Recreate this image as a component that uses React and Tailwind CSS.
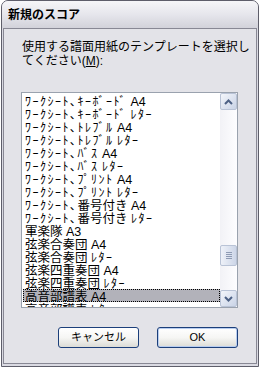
import React from "react";

const items = [
  "ﾜｰｸｼｰﾄ､ｷｰﾎﾞｰﾄﾞ A4",
  "ﾜｰｸｼｰﾄ､ｷｰﾎﾞｰﾄﾞ ﾚﾀｰ",
  "ﾜｰｸｼｰﾄ､ﾄﾚﾌﾞﾙ A4",
  "ﾜｰｸｼｰﾄ､ﾄﾚﾌﾞﾙ ﾚﾀｰ",
  "ﾜｰｸｼｰﾄ､ﾊﾞｽ A4",
  "ﾜｰｸｼｰﾄ､ﾊﾞｽ ﾚﾀｰ",
  "ﾜｰｸｼｰﾄ､ﾌﾟﾘﾝﾄ A4",
  "ﾜｰｸｼｰﾄ､ﾌﾟﾘﾝﾄ ﾚﾀｰ",
  "ﾜｰｸｼｰﾄ､番号付き A4",
  "ﾜｰｸｼｰﾄ､番号付き ﾚﾀｰ",
  "軍楽隊 A3",
  "弦楽合奏団 A4",
  "弦楽合奏団 ﾚﾀｰ",
  "弦楽四重奏団 A4",
  "弦楽四重奏団 ﾚﾀｰ",
  "高音部譜表 A4",
  "高音部譜表 ﾚﾀｰ",
];

const font = { fontFamily: '"Liberation Sans", "Noto Sans CJK JP", sans-serif' };

function Item({ text }) {
  const parts = text.split(/([\uFF61-\uFF9F]+)/).filter((p) => p.length);
  return parts.map((p, i) =>
    /[\uFF61-\uFF9F]/.test(p) ? (
      <span key={i} className="text-[12px] tracking-[1.5px]">
        {p}
      </span>
    ) : (
      <span key={i} className="text-[12.5px]">
        {p}
      </span>
    )
  );
}

function ScrollBtn({ children }) {
  return (
    <div className="h-[17px] w-[17px] rounded-[2px] border border-[#b9c3d6] bg-gradient-to-br from-[#f4f6fb] to-[#c9d3e6] flex items-center justify-center">
      {children}
    </div>
  );
}

export default function App() {
  return (
    <div className="w-[260px] h-[368px] bg-white" style={font}>
      <div className="ml-px w-[258px] h-[367px] border border-[#5e5e6a] rounded-t-[7px] bg-[#dadae2] flex flex-col overflow-hidden">
        <div className="h-[27px] shrink-0 bg-gradient-to-b from-[#f6f6f8] via-[#e6e6ec] to-[#d2d2da] flex items-center pl-[6px]">
          <span className="text-[12px] font-bold text-black leading-none">新規のスコア</span>
        </div>
        <div className="ml-px mr-px mb-[2px] flex-1 border border-[#888894] bg-[#e3e3e8] flex flex-col">
          <div className="pl-[18px] pt-[11px] text-[12px] leading-[14px] text-black">
            <div className="whitespace-nowrap">使用する譜面用紙のテンプレートを選択し</div>
            <div>
              てください(<span className="underline">M</span>):
            </div>
          </div>
          <div className="ml-[17px] mt-[24px] w-[217px] h-[216px] border border-[#9aa2ae] bg-white flex">
            <div className="flex-1 overflow-hidden pl-px pt-px">
              {items.map((t, i) => (
                <div
                  key={i}
                  className={
                    "h-[13px] pl-[2px] leading-[13px] whitespace-nowrap text-black " +
                    (i === 15 ? "bg-[#b2b2ba] outline outline-1 outline-dotted outline-black -outline-offset-1" : "")
                  }
                >
                  <Item text={t} />
                </div>
              ))}
            </div>
            <div className="w-[17px] shrink-0 bg-gradient-to-r from-[#f2f2f6] to-[#fdfdff] flex flex-col">
              <ScrollBtn>
                <svg width="9" height="6" viewBox="0 0 9 6">
                  <path d="M1 5 L4.5 1.5 L8 5" stroke="#4d6185" strokeWidth="2" fill="none" />
                </svg>
              </ScrollBtn>
              <div className="flex-1 flex flex-col">
                <div className="h-[135px]" />
                <div className="h-[21px] w-[17px] rounded-[2px] border border-[#b9c3d6] bg-gradient-to-r from-[#eef1f8] to-[#cdd6e8] flex flex-col items-center justify-center gap-[1px]">
                  <div className="w-[6px] h-px bg-[#8e9bb4]" />
                  <div className="w-[6px] h-px bg-[#8e9bb4]" />
                  <div className="w-[6px] h-px bg-[#8e9bb4]" />
                  <div className="w-[6px] h-px bg-[#8e9bb4]" />
                </div>
              </div>
              <ScrollBtn>
                <svg width="9" height="6" viewBox="0 0 9 6">
                  <path d="M1 1 L4.5 4.5 L8 1" stroke="#4d6185" strokeWidth="2" fill="none" />
                </svg>
              </ScrollBtn>
            </div>
          </div>
          <div className="mt-[19px] ml-[54px] flex gap-[18px]">
            <div className="w-[81px] h-[21px] rounded-[3px] border border-[#1c3f7a] bg-gradient-to-b from-white via-[#f6f6f4] to-[#dcdcd6] flex items-center justify-center text-[11px] text-black">
              キャンセル
            </div>
            <div className="w-[81px] h-[21px] rounded-[3px] border border-[#1c3f7a] bg-gradient-to-b from-white via-[#f6f6f4] to-[#dcdcd6] shadow-[inset_0_0_0_1px_#b8cdf0] flex items-center justify-center text-[11px] text-black">
              OK
            </div>
          </div>
        </div>
      </div>
    </div>
  );
}
